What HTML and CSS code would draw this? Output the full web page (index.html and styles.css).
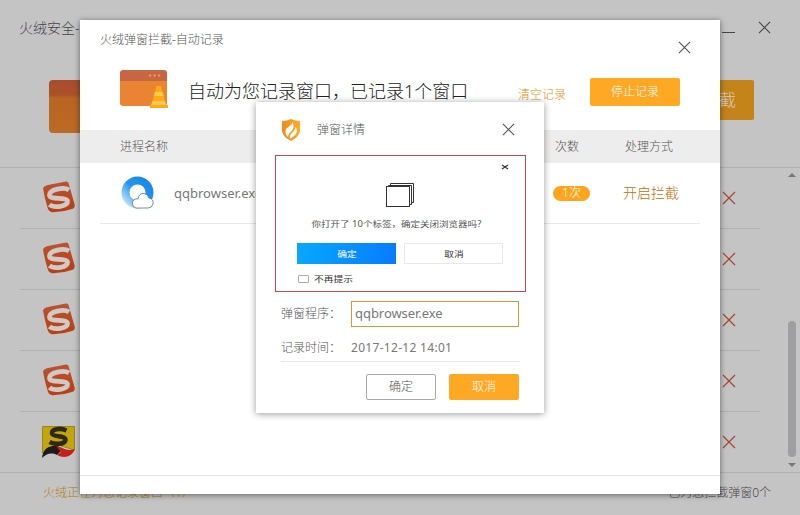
FILE: index.html
```html
<!DOCTYPE html>
<html lang="zh-CN">
<head>
<meta charset="utf-8">
<title>火绒弹窗拦截</title>
<link rel="stylesheet" href="styles.css">
</head>
<body>
<svg class="defs" aria-hidden="true">
  <defs>
    <linearGradient id="red" x1="0" y1="0" x2="0" y2="1"><stop offset="0" stop-color="#b85433"/><stop offset="1" stop-color="#b83f12"/></linearGradient>
    <linearGradient id="box" x1="0" y1="0" x2="0" y2="1"><stop offset="0" stop-color="#a84d2c"/><stop offset=".28" stop-color="#ac5229"/><stop offset=".34" stop-color="#b96523"/><stop offset="1" stop-color="#bd6a24"/></linearGradient>
    <linearGradient id="blue" x1="1" y1="0" x2="0" y2="1"><stop offset="0" stop-color="#1687e8"/><stop offset=".5" stop-color="#2795ea"/><stop offset="1" stop-color="#c5e5fb"/></linearGradient>
    <linearGradient id="shield" x1="0" y1="0" x2="1" y2="0"><stop offset="0" stop-color="#f08a20"/><stop offset="1" stop-color="#ffad20"/></linearGradient>
    <symbol id="sogou" viewBox="0 0 34 34">
      <path d="M1 7.500Q2 4.500 6 4L24 .5Q26 .3 26.500 2L32.800 24Q33 27 30 28Q20 31.500 10 31.300Q7 31 6 28Q2.500 17 1 7.500Z" fill="url(#red)"/>
      <path d="M27 9C22 5.500 7.500 8.500 7.500 14C7.500 19.500 24.500 15.500 25.500 20C26 25.500 12 27.500 7.500 23.500" fill="none" stroke="#d0c9c6" stroke-width="4.800"/>
    </symbol>
    <symbol id="cross" viewBox="0 0 14 14"><path d="M1 1L13 13M13 1L1 13" fill="none" stroke="currentColor" stroke-width="1.200"/></symbol>
  </defs>
</svg>

<main class="app">
  <header class="app-bar">
    <span class="app-title">火绒安全-</span>
    <span class="minimize"></span>
    <svg class="app-close"><use href="#cross"/></svg>
  </header>
  <section class="app-hero">
    <svg class="hero-icon" viewBox="0 0 54 54"><rect width="54" height="53" rx="4" fill="url(#box)"/></svg>
    <span class="hero-button">停止拦截</span>
  </section>
  <section class="app-body">
    <ul class="rows">
      <li class="row"><svg class="logo"><use href="#sogou"/></svg><svg class="remove"><use href="#cross"/></svg></li>
      <li class="row"><svg class="logo"><use href="#sogou"/></svg><svg class="remove"><use href="#cross"/></svg></li>
      <li class="row"><svg class="logo"><use href="#sogou"/></svg><svg class="remove"><use href="#cross"/></svg></li>
      <li class="row"><svg class="logo"><use href="#sogou"/></svg><svg class="remove"><use href="#cross"/></svg></li>
      <li class="row">
        <svg class="logo" viewBox="0 0 34 34">
          <path d="M.5 1.500H32.500V25L16 20L.5 28Z" fill="#c3a60e" stroke="#9b8520"/>
          <path d="M24.500 5.500C18 2.500 9 4 10 8.500C11 12.500 23.500 10 23.500 15C22.500 20 12 19.500 7.500 17" fill="none" stroke="#302a13" stroke-width="4.600"/>
          <path d="M0 33C1 23 8 20 16 21L20 25L15 30C9 27 4 29 0 33Z" fill="#211a18"/>
          <path d="M14 21C21 22 24 27 33 24C30 32 22 34 15 30L19 27Z" fill="#c51e1b"/>
        </svg>
        <svg class="remove"><use href="#cross"/></svg>
      </li>
    </ul>
    <div class="scroll"><i class="up"></i><i class="thumb"></i><i class="down"></i></div>
  </section>
  <footer class="app-foot"><span class="recording">火绒正在为您记录窗口（1）</span><span>已为您拦截弹窗0个</span></footer>
</main>

<section class="record">
  <header class="record-bar"><span>火绒弹窗拦截-自动记录</span><svg class="record-close"><use href="#cross"/></svg></header>
  <div class="record-hero">
    <svg class="record-icon" viewBox="0 0 48 40">
      <rect y="1" width="47" height="35" rx="3" fill="#ea8433"/>
      <path d="M0 11V3Q0 0 3 0H44Q47 0 47 3V11Z" fill="#c76642"/>
      <path d="M29 5.500h2.200M33.500 5.500h2.200M38 5.500h2.200" stroke="#f0a04d" stroke-width="2"/>
      <path d="M36.500 16H41L46 35H48V38H30V35H31.500Z" fill="#ffab18"/>
      <path d="M34.800 22H42.600L43.700 26H33.700ZM32.300 31H45L46 35H31.300Z" fill="#ffc94c"/>
    </svg>
    <h1>自动为您记录窗口，已记录1个窗口</h1>
    <span class="clear">清空记录</span>
    <button class="stop">停止记录</button>
  </div>
  <div class="table-head"><span>进程名称</span><span>次数</span><span>处理方式</span></div>
  <div class="table-row">
    <svg class="browser" viewBox="0 0 34 34">
      <circle cx="16.500" cy="16.500" r="12" fill="none" stroke="url(#blue)" stroke-width="8"/>
      <path d="M15 32A5 5 0 0 1 12.500 24Q15 22 17 23Q18 17 23 17.500Q27 18 28 22Q33 23 32 28Q31 32 27 32Z" fill="#fff" stroke="#557286" stroke-width=".8"/>
    </svg>
    <span class="process">qqbrowser.exe</span>
    <span class="count">1次</span>
    <span class="enable">开启拦截</span>
  </div>
  <div class="record-foot"></div>
</section>

<section class="detail">
  <header class="detail-bar">
    <svg class="shield" viewBox="0 0 20 24"><path d="M1 3Q6 3 10 1Q14 3 19 3V13Q18 19 10 23Q2 19 1 13Z" fill="url(#shield)"/><path d="M11.500 4Q13 9 9 12Q5 15 6.500 19Q4 16 4.500 13Q5 10 8 8.500Q11 7 11.500 4Z" fill="#fff"/><path d="M11.500 4Q14 10 10.500 13Q7.500 15 7 19Q3.500 14 7 10Q11 8 11.500 4ZM14.500 8.500Q17.500 14 14 17L9 21Q8 17 11.500 14.500Q14.500 12 14.500 8.500Z" fill="#fff"/></svg>
    <span>弹窗详情</span>
    <svg class="detail-close"><use href="#cross"/></svg>
  </header>
  <div class="preview">
    <svg class="preview-close" viewBox="0 0 8 6"><path d="M1 1L7 5M7 1L1 5" stroke="#333" stroke-width="1.200"/></svg>
    <svg class="pages" viewBox="0 0 30 26"><path d="M5.500 3.500V1.500H28.500V20.500H26.500M3.500 5V3.500H26.500V22.500H24" fill="#fff" stroke="#333"/><rect x="1.500" y="4.500" width="23" height="20" fill="#fff" stroke="#333"/></svg>
    <p class="question"><span class="wide">你打开了 10个标签，确定关闭浏览器吗?</span></p>
    <div class="choices"><span class="yes"><b class="wide">确定</b></span><span class="no"><b class="wide">取消</b></span></div>
    <div class="again"><i></i><span class="wide">不再提示</span></div>
  </div>
  <div class="field"><label>弹窗程序：</label><span class="input">qqbrowser.exe</span></div>
  <div class="field time"><label>记录时间：</label><span>2017-12-12 14:01</span></div>
  <div class="actions"><button class="ok">确定</button><button class="cancel">取消</button></div>
</section>
</body>
</html>
```
FILE: styles.css
```css
* { box-sizing: border-box; margin: 0; padding: 0; }
body { width: 800px; height: 515px; overflow: hidden; position: relative; font: 300 12px/18px "Noto Sans", "Noto Sans CJK SC", sans-serif; color: #555; }
svg { display: block; flex: none; overflow: visible; }
button { font: inherit; border: 0; border-radius: 2px; }
.defs { position: absolute; width: 0; height: 0; }

.app { width: 800px; height: 515px; background: #c5c4c5; display: flex; flex-direction: column; color: #444; }
.app-bar { height: 56px; display: flex; align-items: center; padding: 0 29px 0 19px; font-size: 14px; flex: none; }
.app-title { flex: 1; }
.minimize { width: 13px; height: 1px; background: #444; margin: 8px 23px 0 0; }
.app-close { width: 13px; height: 13px; margin-top: -2px; color: #444; }
.app-hero { height: 112px; flex: none; border-bottom: 1px solid #b1b0b1; padding: 24px 46px 0 49px; display: flex; justify-content: space-between; }
.hero-icon { width: 54px; height: 54px; }
.hero-button { width: 120px; height: 40px; border-radius: 2px; background: #c58419; color: #d6cabd; font-size: 17px; line-height: 40px; text-align: right; padding-right: 18px; }
.app-body { height: 305px; flex: none; border-bottom: 1px solid #b1b0b1; display: flex; justify-content: space-between; }
.rows { list-style: none; width: 760px; padding-left: 20px; }
.row { height: 61px; border-bottom: 1px solid #b2b1b2; padding: 0 17px 0 22px; display: flex; align-items: center; justify-content: space-between; }
.row:last-child { border: 0; height: 60px; }
.logo { width: 34px; height: 34px; }
.remove { width: 14px; height: 14px; margin-right: 7px; color: #a5442f; }
.scroll { width: 16px; display: flex; flex-direction: column; align-items: center; padding: 5px 0; }
.up, .down { border: 4px solid transparent; border-top-width: 0; border-bottom: 4px solid #777; }
.thumb { width: 8px; height: 136px; border-radius: 4px; background: #9f9ea0; margin-top: 144px; }
.down { border-bottom-width: 0; border-top: 4px solid #777; margin-top: 6px; }
.app-foot { display: flex; justify-content: space-between; padding: 11px 29px 0 43px; }
.recording { color: #b07c20; }

.record { position: absolute; left: 80px; top: 20px; width: 640px; height: 474px; background: #fff; box-shadow: 0 1px 6px rgba(0,0,0,.5); display: flex; flex-direction: column; }
.record-bar { height: 40px; display: flex; justify-content: space-between; padding: 11px 29px 0 20px; }
.record-close { width: 13px; height: 13px; margin-top: 10px; color: #555; }
.record-hero { height: 70px; display: flex; padding: 0 40px; }
.record-icon { width: 48px; height: 40px; margin-top: 10px; }
h1 { font-weight: 300; font-size: 18px; line-height: 24px; margin: 19px 0 0 20px; width: 330px; flex: none; white-space: nowrap; color: #222; }
.clear { color: #de9216; margin: 26px 0 0; width: 72px; flex: none; }
.stop { width: 90px; height: 28px; background: #ffa824; color: #fff; margin-top: 18px; flex: none; }
.table-head { height: 33px; background: #ededed; display: grid; grid-template-columns: 435px 70px 1fr; padding-left: 40px; line-height: 33px; }
.table-row { height: 61px; margin: 0 20px; border-bottom: 1px solid #e8e8e8; display: flex; align-items: center; }
.browser { width: 34px; height: 34px; margin-left: 21px; }
.process { width: 379px; padding-left: 19px; font-weight: 400; font-size: 13px; color: #777; }
.count { width: 37px; height: 15px; line-height: 14px; border-radius: 8px; background: #ffa51d; color: #fff; text-align: center; margin-left: 19px; }
.enable { font-size: 14px; color: #bf6f08; margin-left: 33px; }
.record-foot { height: 19px; border-top: 1px solid #e3e3e3; margin-top: auto; }

.detail { position: absolute; left: 256px; top: 102px; width: 288px; height: 311px; background: #fff; box-shadow: 0 1px 7px rgba(0,0,0,.4); }
.detail-bar { height: 53px; display: flex; align-items: center; padding: 2px 29px 0 25px; }
.detail-bar span { flex: 1; padding-left: 16px; }
.shield { width: 20px; height: 24px; }
.detail-close { width: 13px; height: 13px; color: #555; }
.preview { width: 251px; height: 137px; border: 1px solid #c8474f; margin-left: 19px; display: flex; flex-direction: column; color: #333; font-size: 8px; font-weight: 400; line-height: 12px; }
.preview-close { width: 8px; height: 6px; margin: 8px 0 0 225px; }
.pages { width: 30px; height: 26px; margin: 12px 0 0 109px; }
.wide { display: inline-block; font-weight: 400; transform: scaleX(1.22); transform-origin: center; white-space: nowrap; }
.question { margin-top: 10px; padding-right: 8px; text-align: center; color: #555; }
.question .wide { transform: scaleX(1.19); }
.choices { display: flex; gap: 8px; padding-left: 21px; margin-top: 13px; text-align: center; line-height: 21px; }
.choices span { width: 99px; height: 21px; }
.yes { background: linear-gradient(100deg, #08a8ff, #087aff); color: #fff; }
.choices .no { border: 1px solid #e8e8e8; line-height: 19px; }
.again { display: flex; align-items: center; margin: 9px 0 0 22px; }
.again i { width: 11px; height: 8px; border: 1px solid #aaa; border-radius: 1px; margin-right: 5px; }
.again .wide { transform-origin: left; }
.field { display: flex; align-items: center; height: 26px; margin: 9px 0 0 25px; }
.field label { width: 70px; }
.field > span { font-weight: 400; color: #777; }
.field .input { width: 168px; height: 26px; border: 1px solid #d29a3b; line-height: 23px; padding-left: 3px; font-size: 13px; letter-spacing: -.05px; }
.time { height: 26px; width: 239px; border-bottom: 1px solid #e7e7e7; padding-bottom: 1px; }
.time > span { letter-spacing: .3px; }
.actions { display: flex; gap: 13px; padding: 12px 0 0 110px; }
.actions button { width: 70px; height: 26px; }
.actions .ok { background: #fff; color: #555; border: 1px solid #aaa; }
.cancel { background: #ffa824; color: #fff; }
```
